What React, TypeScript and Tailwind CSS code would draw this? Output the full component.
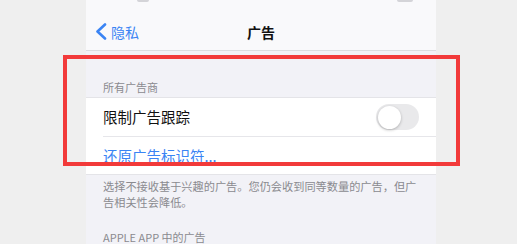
function Toggle() {
  return (
    <div className="w-[43px] h-[26px] rounded-full bg-[#e9e9eb] p-[1.5px] flex items-center">
      <div className="w-[23px] h-[23px] rounded-full bg-white shadow-[0_1px_3px_rgba(0,0,0,0.25)]" />
    </div>
  );
}

function BackChevron() {
  return (
    <svg width="12" height="17" viewBox="0 0 12 17" fill="none">
      <path d="M10 1.5 L2.5 8.5 L10 15.5" stroke="currentColor" strokeWidth="2.6" strokeLinecap="round" strokeLinejoin="round" />
    </svg>
  );
}

export default function App() {
  return (
    <div
      className="relative w-[517px] h-[244px] overflow-hidden bg-[#efefef] pl-[86px]"
      style={{ fontFamily: '"Noto Sans CJK SC", "Noto Sans", sans-serif' }}
    >
      <div className="w-[350px] h-full flex flex-col bg-[#f2f2f7]">
        {/* nav */}
        <div className="relative h-[51px] shrink-0 bg-[#f9f9fb] border-b border-[#dcdce0] pt-[13px]">
          <div className="absolute left-[51px] top-0 w-[12px] h-[2px] rounded-b bg-[#d4d4d8]" />
          <div className="absolute left-[311px] top-0 w-[16px] h-[2px] rounded-b bg-[#d4d4d8]" />
          <div className="relative h-[37px] flex items-center justify-center">
            <div className="absolute left-[9px] top-0 h-full flex items-center gap-[4px] text-[#3a84f4]">
              <BackChevron />
              <span className="text-[14px] leading-none">隐私</span>
            </div>
            <span className="text-[14px] font-semibold text-[#111] leading-none">广告</span>
          </div>
        </div>

        {/* section header */}
        <div className="h-[46px] shrink-0 flex items-end px-[17px] pb-[3px]">
          <span className="text-[11px] leading-[13px] text-[#8a8a8f]">所有广告商</span>
        </div>

        {/* group */}
        <div className="shrink-0 bg-white border-y border-[#e4e4e8]">
          <div className="h-[38px] flex items-center justify-between pl-[17px] pr-[17px]">
            <span className="text-[14.5px] text-[#111]">限制广告跟踪</span>
            <Toggle />
          </div>
          <div className="ml-[17px] border-t border-[#e6e6ea]" />
          <div className="h-[37px] flex items-center pl-[17px]">
            <span className="text-[14.5px] text-[#3a84f4]">还原广告标识符...</span>
          </div>
        </div>

        {/* footer */}
        <div className="px-[17px] pt-[4px] text-[11.2px] leading-[15.7px] text-[#8a8a8f]">
          选择不接收基于兴趣的广告。您仍会收到同等数量的广告，但广告相关性会降低。
        </div>
        <div className="px-[17px] pt-[21px] text-[11px] leading-[13px] text-[#8a8a8f]">
          APPLE APP 中的广告
        </div>
      </div>

      {/* annotation */}
      <div className="absolute left-[63px] top-[55px] w-[397px] h-[111px] border-[4px] border-[#f23a3a]" />
    </div>
  );
}
